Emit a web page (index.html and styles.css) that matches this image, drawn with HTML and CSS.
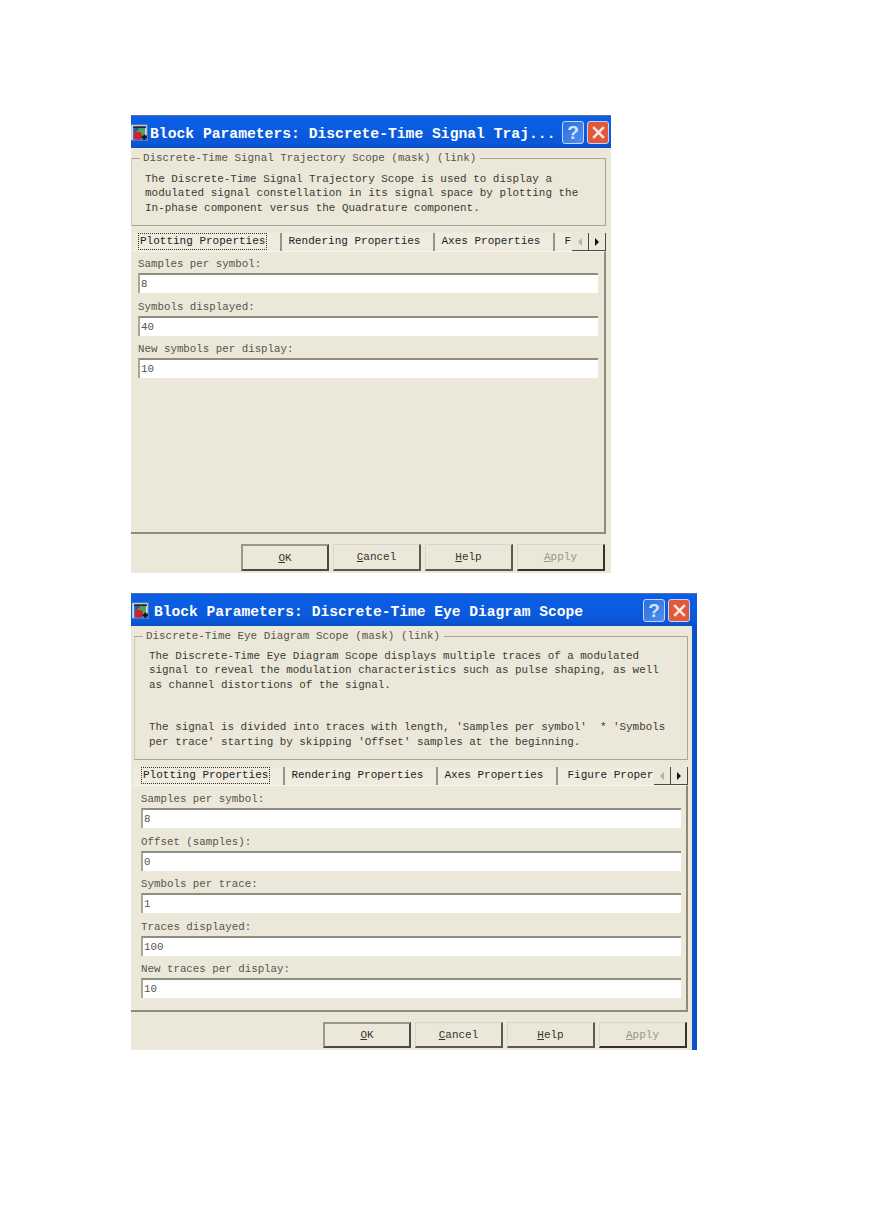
FILE: index.html
```html
<!DOCTYPE html>
<html lang="en">
<head>
<meta charset="utf-8">
<title>Block Parameters</title>
<link rel="stylesheet" href="styles.css">
</head>
<body>
<main class="page">
  <section class="dialog dialog-traj">
    <header class="titlebar">
      <svg class="app-icon" viewBox="0 0 16 16"><rect width="16" height="16" fill="#4f78c4"/><path d="M1 15V2h13v8" fill="none" stroke="#e8e6dc" stroke-width="1.500"/><path d="M2 3h12" stroke="#23263a" stroke-width="1.800"/><path d="M3 4h10v6l-5 4-5-1z" fill="#4ea45a"/><path d="M3 4h5l-5 5z" fill="#2b4fa8"/><circle cx="6.500" cy="11" r="3.800" fill="#d4202a"/><path d="M10 12.500h5M12.500 10v5" stroke="#111" stroke-width="1.800"/></svg>
      <h1 class="title">Block Parameters: Discrete-Time Signal Traj...</h1>
      <span class="win-btn win-help">?</span>
      <span class="win-btn win-close"><svg viewBox="0 0 16 16"><path d="M3 3l10 10M13 3L3 13" stroke="#fbe9e2" stroke-width="2.400" fill="none"/></svg></span>
    </header>
    <fieldset class="group">
      <legend>Discrete-Time Signal Trajectory Scope (mask) (link)</legend>
      <p>The Discrete-Time Signal Trajectory Scope is used to display a</p>
      <p>modulated signal constellation in its signal space by plotting the</p>
      <p>In-phase component versus the Quadrature component.</p>
    </fieldset>
    <nav class="tabs">
      <div class="tab-list">
        <span class="tab tab-active"><span class="focus">Plotting Properties</span></span>
        <span class="tab">Rendering Properties</span>
        <span class="tab">Axes Properties</span>
        <span class="tab tab-last">F</span>
      </div>
      <span class="scroller"><i class="arrow arrow-left"></i><i class="arrow arrow-right"></i></span>
    </nav>
    <div class="panel">
      <label class="field"><span>Samples per symbol:</span><span class="input">8</span></label>
      <label class="field"><span>Symbols displayed:</span><span class="input">40</span></label>
      <label class="field"><span>New symbols per display:</span><span class="input">10</span></label>
    </div>
    <footer class="actions">
      <button class="btn btn-default"><u>O</u>K</button>
      <button class="btn"><u>C</u>ancel</button>
      <button class="btn"><u>H</u>elp</button>
      <button class="btn btn-off"><u>A</u>pply</button>
    </footer>
  </section>

  <section class="dialog dialog-eye">
    <header class="titlebar">
      <svg class="app-icon" viewBox="0 0 16 16"><rect width="16" height="16" fill="#4f78c4"/><path d="M1 15V2h13v8" fill="none" stroke="#e8e6dc" stroke-width="1.500"/><path d="M2 3h12" stroke="#23263a" stroke-width="1.800"/><path d="M3 4h10v6l-5 4-5-1z" fill="#4ea45a"/><path d="M3 4h5l-5 5z" fill="#2b4fa8"/><circle cx="6.500" cy="11" r="3.800" fill="#d4202a"/><path d="M10 12.500h5M12.500 10v5" stroke="#111" stroke-width="1.800"/></svg>
      <h1 class="title">Block Parameters: Discrete-Time Eye Diagram Scope</h1>
      <span class="win-btn win-help">?</span>
      <span class="win-btn win-close"><svg viewBox="0 0 16 16"><path d="M3 3l10 10M13 3L3 13" stroke="#fbe9e2" stroke-width="2.400" fill="none"/></svg></span>
    </header>
    <fieldset class="group">
      <legend>Discrete-Time Eye Diagram Scope (mask) (link)</legend>
      <p>The Discrete-Time Eye Diagram Scope displays multiple traces of a modulated</p>
      <p>signal to reveal the modulation characteristics such as pulse shaping, as well</p>
      <p>as channel distortions of the signal.</p>
      <p class="spacer">The signal is divided into traces with length, 'Samples per symbol'  * 'Symbols</p>
      <p>per trace' starting by skipping 'Offset' samples at the beginning.</p>
    </fieldset>
    <nav class="tabs">
      <div class="tab-list">
        <span class="tab tab-active"><span class="focus">Plotting Properties</span></span>
        <span class="tab">Rendering Properties</span>
        <span class="tab">Axes Properties</span>
        <span class="tab tab-last">Figure Proper</span>
      </div>
      <span class="scroller"><i class="arrow arrow-left"></i><i class="arrow arrow-right"></i></span>
    </nav>
    <div class="panel">
      <label class="field"><span>Samples per symbol:</span><span class="input">8</span></label>
      <label class="field"><span>Offset (samples):</span><span class="input">0</span></label>
      <label class="field"><span>Symbols per trace:</span><span class="input">1</span></label>
      <label class="field"><span>Traces displayed:</span><span class="input">100</span></label>
      <label class="field"><span>New traces per display:</span><span class="input">10</span></label>
    </div>
    <footer class="actions">
      <button class="btn btn-default"><u>O</u>K</button>
      <button class="btn"><u>C</u>ancel</button>
      <button class="btn"><u>H</u>elp</button>
      <button class="btn btn-off"><u>A</u>pply</button>
    </footer>
  </section>
</main>
</body>
</html>
```
FILE: styles.css
```css
* { box-sizing: border-box; }

html, body {
  margin: 0;
  background: #fff;
}

.page {
  display: flex;
  flex-direction: column;
  align-items: flex-start;
  gap: 20px;
  padding: 115px 0 0 131px;
  min-height: 1228px;
}

.dialog {
  display: flex;
  flex-direction: column;
  background: #ebe8d9;
  font-family: "Liberation Mono", monospace;
  font-size: 11px;
  color: #3a3a34;
}

.dialog-traj { width: 480px; height: 458px; }

.dialog-eye {
  width: 566px;
  height: 457px;
  padding-left: 3px;
  border-right: 5px solid #0d50c8;
}

.titlebar {
  flex: none;
  display: flex;
  align-items: center;
  height: 33px;
  padding: 1px 2px 0 0;
  border-top: 1px solid #5a6f9e;
  background: linear-gradient(#0b5fe6, #0a5ce0 40%, #0a57d8 85%, #0a4fc4);
}

.dialog-eye .titlebar {
  margin: 0 -5px 0 -3px;
  padding-right: 7px;
  padding-left: 1px;
}

.app-icon {
  flex: none;
  width: 17px;
  height: 17px;
}

.title {
  flex: 1;
  margin: 2px 0 0 2px;
  font-size: 14.700px;
  font-weight: 700;
  color: #fff;
  white-space: nowrap;
  overflow: hidden;
}

.dialog-eye .title { margin-left: 5px; font-size: 14.600px; }

.win-btn {
  flex: none;
  display: flex;
  align-items: center;
  justify-content: center;
  width: 22px;
  height: 23px;
  margin-left: 4px;
  border: 1px solid #c4d6f5;
  border-radius: 3px;
}

.win-help {
  background: linear-gradient(135deg, #2a6ee0, #4f90ee);
  color: #d6e4fb;
  font: 700 19px "Liberation Sans", sans-serif;
}

.win-close { background: #e2583a; margin-left: 3px; }
.win-close svg { width: 17px; height: 17px; }

.group {
  flex: none;
  min-width: 0;
  margin: 3px 5px 0 0;
  padding: 6.500px 0 10px 13px;
  border: 1px solid #a9a797;
  border-left-color: #c9c7b8;
}

.dialog-eye .group {
  margin-right: 4px;
  padding-top: 5.500px;
  padding-left: 14px;
}

.group legend {
  margin-left: -5px;
  padding: 0 4px 0 3px;
  font-size: 10.900px;
  line-height: 14px;
  color: #55554c;
}

.dialog-eye .group legend { margin-left: -6px; }

.group p {
  margin: 0;
  font-size: 10.950px;
  line-height: 14.500px;
  white-space: pre;
}

.dialog-eye .group p { font-size: 10.900px; }

.group .spacer { margin-top: 28px; }

.tabs {
  flex: none;
  display: flex;
  height: 18px;
  margin: 7px 5px 0 0;
}

.dialog-eye .tabs { margin-right: 4px; }

.tab-list {
  flex: 1;
  min-width: 0;
  display: flex;
  white-space: nowrap;
}

.tab {
  flex: none;
  padding: 0 13px 0 6px;
  line-height: 17px;
  color: #22221e;
  border-right: 2px solid #97958a;
  background: #efecdf;
}

.tab-active { padding-left: 7px; }

.tab-last {
  flex: 1;
  padding: 0 0 0 9px;
  border-right: 0;
}

.focus {
  display: block;
  height: 17px;
  padding: 0 1px;
  border: 1px dotted #33332c;
  line-height: 14px;
}

.scroller {
  flex: none;
  display: flex;
  width: 34px;
  border-bottom: 1px solid #4a4a42;
  background: #ebe8d9;
}

.arrow {
  flex: 1;
  display: flex;
  align-items: center;
  justify-content: center;
  border-right: 1px solid #4a4a42;
}

.arrow::before {
  content: "";
  border-block: 4px solid transparent;
}

.arrow-left::before { border-right: 4px solid #b4b2a6; }
.arrow-right::before { border-left: 4px solid #111; }

.panel {
  flex: 1;
  display: flex;
  flex-direction: column;
  gap: 6.500px;
  margin-right: 5px;
  padding: 5px 6px 0 7px;
  border-top: 1px solid #f6f4ea;
  border-right: 2px solid #8d8b7c;
  border-bottom: 2px solid #8d8b7c;
}

.dialog-eye .panel {
  margin: 0 4px 0 -3px;
  padding: 6px 5px 0 10px;
}

.field {
  display: flex;
  flex-direction: column;
  gap: 2px;
  font-size: 10.800px;
  color: #55554c;
}

.field > span:first-child { line-height: 14px; }

.input {
  height: 20px;
  padding: 0 0 0 1px;
  border-top: 2px solid #8f8d80;
  border-left: 2px solid #a9a797;
  background: #fff;
  line-height: 19px;
}

.actions {
  flex: none;
  display: flex;
  justify-content: flex-end;
  gap: 4px;
  height: 39px;
  padding: 10px 6px 0 0;
}

.dialog-eye .actions {
  height: 38px;
  padding-right: 5px;
}

.btn {
  width: 88px;
  height: 27px;
  padding: 0;
  border: 1px solid #d8d6c8;
  border-right: 2px solid #5b5a50;
  border-bottom: 2px solid #5b5a50;
  background: #ebe8d9;
  color: #33332c;
  font: inherit;
}

.dialog-eye .btn { height: 26px; }

.btn-default {
  border: 2px solid #9a988a;
  border-right-color: #4a4a42;
  border-bottom-color: #4a4a42;
}

.btn-off {
  color: #98968a;
  border-right-color: #33332c;
  border-bottom-color: #33332c;
}
```
